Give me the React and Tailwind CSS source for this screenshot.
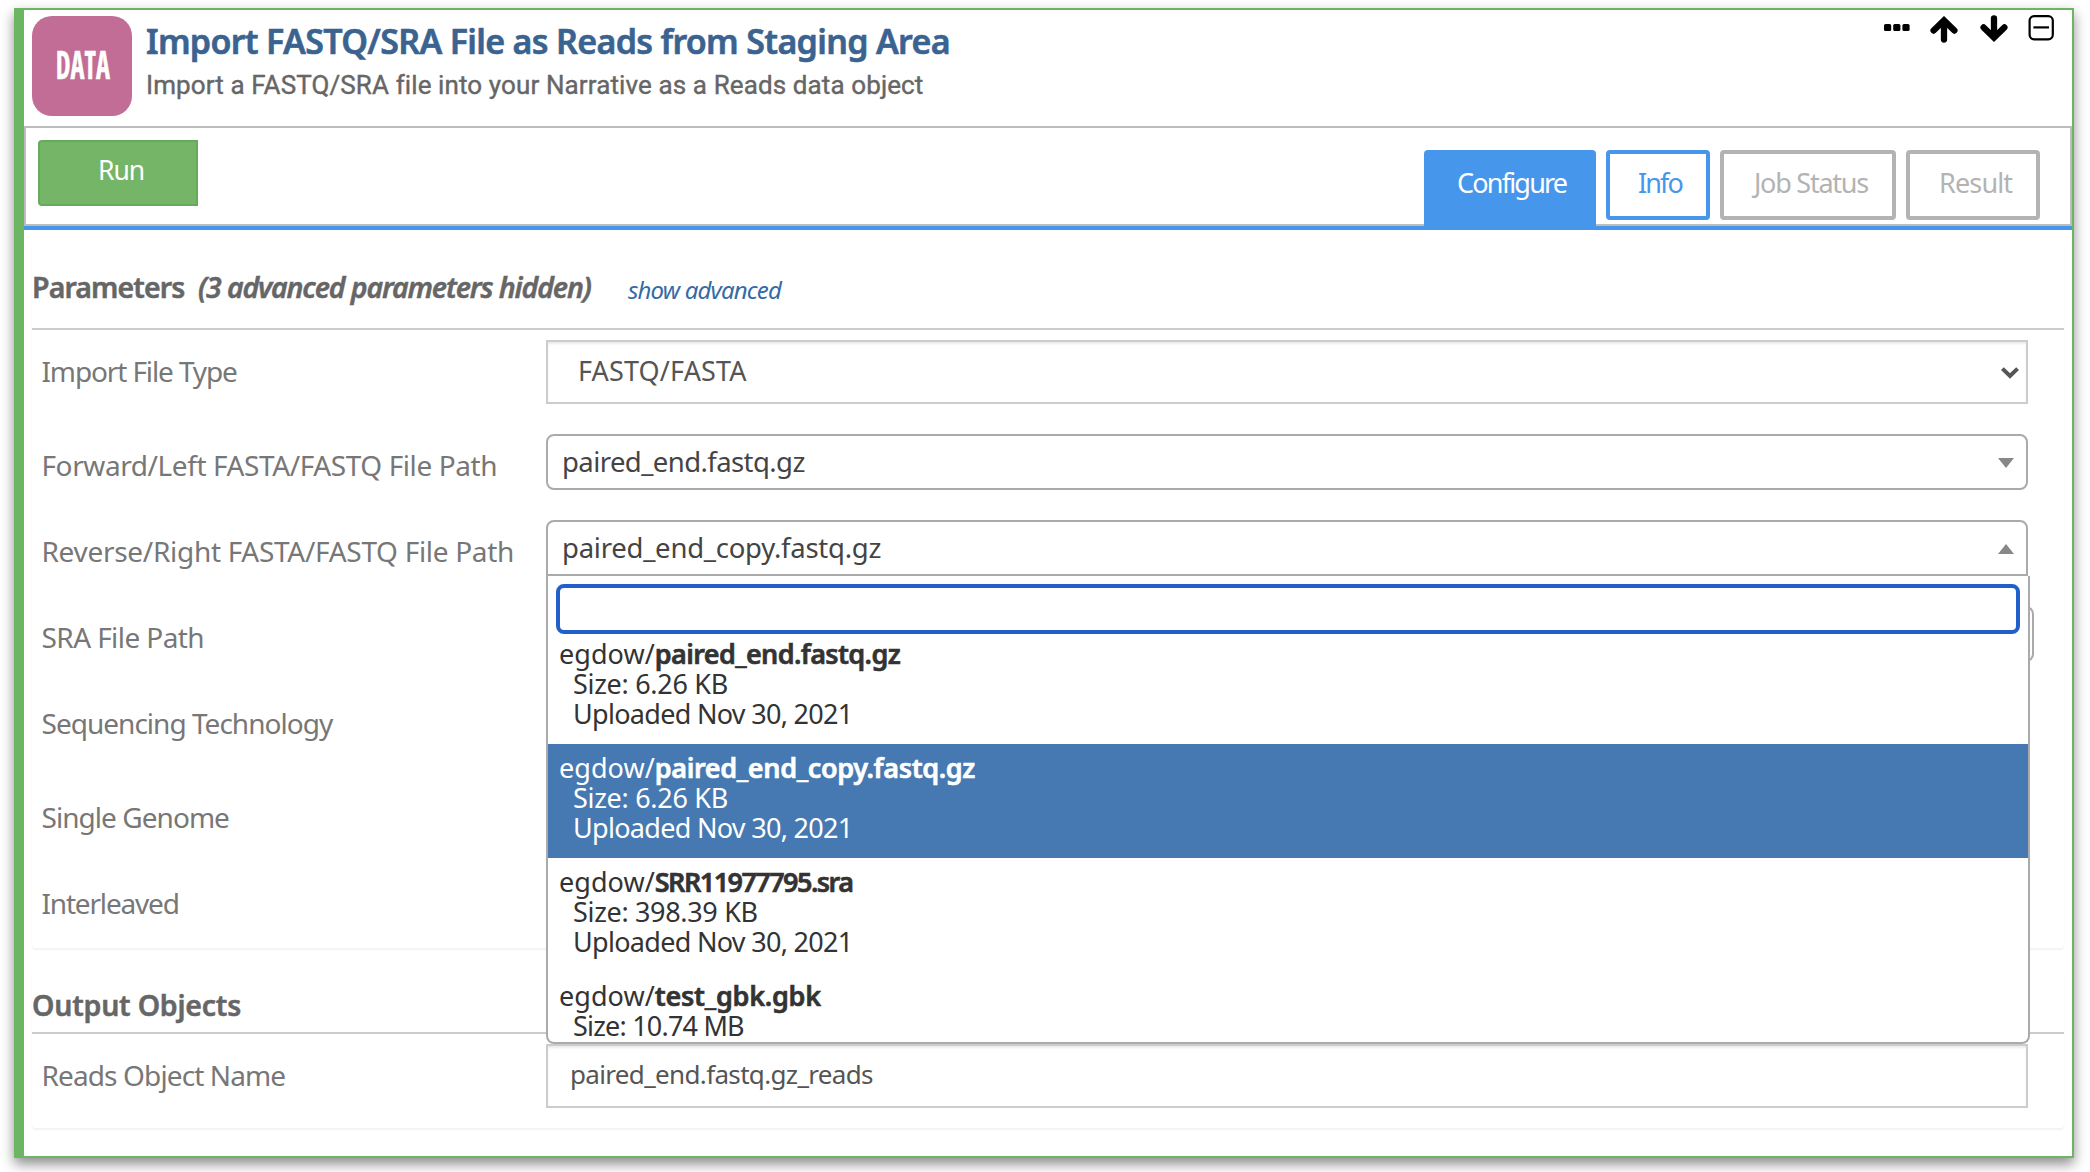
import React from "react";

const OPTIONS = [
  { name: "paired_end.fastq.gz", nameTracking: "tracking-[-0.64px]", size: "Size: 6.26 KB", sizeTracking: "tracking-[-0.3px]", date: "Uploaded Nov 30, 2021" },
  { name: "paired_end_copy.fastq.gz", nameTracking: "tracking-[-0.37px]", size: "Size: 6.26 KB", sizeTracking: "tracking-[-0.3px]", date: "Uploaded Nov 30, 2021", active: true },
  { name: "SRR11977795.sra", nameTracking: "tracking-[-1.55px]", size: "Size: 398.39 KB", sizeTracking: "tracking-[-0.33px]", date: "Uploaded Nov 30, 2021" },
  { name: "test_gbk.gbk", nameTracking: "tracking-[-0.27px]", size: "Size: 10.74 MB", sizeTracking: "tracking-[-0.8px]" },
];

function Row({ label, tracking, height, children }) {
  return (
    <div className={`flex items-start pl-2 ${height}`}>
      <div className={`w-[506px] shrink-0 whitespace-nowrap pl-[1.5px] text-[28px] leading-[62px] text-[#777] ${tracking}`}>
        {label}
      </div>
      {children}
    </div>
  );
}

function Arrow({ down }) {
  return (
    <svg
      viewBox="0 0 28 27"
      className={down ? "h-[27px] w-7 rotate-180" : "mt-px h-[27px] w-7"}
      fill="none"
      stroke="black"
      strokeWidth="6.3"
      strokeLinecap="round"
    >
      <path d="M3.6 14.6 14 4.4 24.4 14.6M14 6V23.6" />
    </svg>
  );
}

function CellActions() {
  return (
    <div className="-mt-px ml-auto flex items-start">
      <svg viewBox="0 0 26 8" className="mr-5 mt-[9px] h-2 w-[26px]">
        <rect x="0" y="0" width="7.2" height="7" rx="1.6" />
        <rect x="9.2" y="0" width="7.2" height="7" rx="1.6" />
        <rect x="18.4" y="0" width="7.2" height="7" rx="1.6" />
      </svg>
      <Arrow />
      <span className="w-[22px]" />
      <Arrow down />
      <svg viewBox="0 0 26 26" className="ml-5 size-[26px]" fill="none" stroke="black" strokeWidth="2.2">
        <rect x="1.6" y="1.1" width="23.2" height="23.2" rx="4.5" />
        <path d="M5.4 12.4H21" />
      </svg>
    </div>
  );
}

function Dropdown() {
  return (
    <div className="absolute -left-0.5 top-[54px] z-10 flex h-[468px] w-[1484px] flex-col overflow-hidden rounded-b-lg border-2 border-t-0 border-[#aaa] bg-white text-[27px] leading-[30px] text-[#333]">
      <div className="mx-2 mt-2 h-[50px] shrink-0 rounded-lg border-4 border-[#2160c8]" />
      <div className="-mt-1 overflow-hidden">
        {OPTIONS.map((o) => (
          <div
            key={o.name}
            className={`h-[114px] whitespace-nowrap pl-[11px] pt-[9px] ${o.active ? "bg-[#4679b2] text-white" : ""}`}
          >
            <div>
              <span className="tracking-[0.05px]">egdow/</span>
              <span className={`font-semibold [-webkit-text-stroke:0.6px_currentColor] ${o.nameTracking}`}>{o.name}</span>
            </div>
            <div className={`pl-3.5 ${o.sizeTracking}`}>{o.size}</div>
            {o.date && <div className="pl-3.5 tracking-[-0.7px]">{o.date}</div>}
          </div>
        ))}
      </div>
    </div>
  );
}

export default function App() {
  return (
    <div className="h-[1172px] overflow-hidden bg-white font-['Noto_Sans',sans-serif]">
      <div className="ml-3.5 mt-2 flex h-[1150px] w-[2060px] flex-col border-2 border-l-[10px] border-[#6bb563] bg-white shadow-[0_6px_12px_rgba(0,0,0,0.45)]">
        <header className="flex h-[116px] shrink-0 whitespace-nowrap pl-2 pr-[18px] pt-1.5">
          <div className="flex size-[100px] items-center justify-center rounded-[20px] bg-[#c16d96] pb-1.5 pl-px">
            <span className="scale-x-[0.68] font-['Open_Sans',sans-serif] text-[39px] font-bold leading-none text-white [-webkit-text-stroke:0.5px_white] [font-stretch:75%]">
              DATA
            </span>
          </div>
          <div className="ml-[13px]">
            <h1 className="pl-px text-[34px] font-semibold leading-[50px] tracking-[-0.68px] text-[#3a6390] [-webkit-text-stroke:0.6px_currentColor]">
              Import FASTQ/SRA File as Reads from Staging Area
            </h1>
            <p className="pl-px pt-px font-[Roboto,sans-serif] text-[26px] leading-9 tracking-[0.11px] text-[#666] [-webkit-text-stroke:0.4px_currentColor]">
              Import a FASTQ/SRA file into your Narrative as a Reads data object
            </p>
          </div>
          <CellActions />
        </header>

        <div className="flex h-[100px] shrink-0 justify-between whitespace-nowrap border-2 border-[#bdbdbd] pl-3 pr-[30px]">
          <button className="mt-3 h-[66px] w-40 rounded-l-[4px] border-2 border-[#66ab5a] bg-[#75b567] pl-[58px] text-left text-[26.5px] leading-[57px] tracking-[-1.08px] text-white">
            <span className="block h-full">Run</span>
          </button>
          <div className="mt-[22px] flex gap-2.5 text-[27px]">
            <div className="-mb-0.5 h-[76px] w-[172px] rounded-t-[4px] bg-[#4696ec] pl-[33px] leading-[65px] tracking-[-1.8px] text-white">Configure</div>
            <div className="h-[70px] w-[104px] rounded-[4px] border-4 border-[#4696ec] pl-7 leading-[57px] tracking-[-1.9px] text-[#4696ec]">Info</div>
            <div className="h-[70px] w-[176px] rounded-[4px] border-4 border-[#b3b3b3] pl-[30px] leading-[57px] tracking-[-1.25px] text-[#b3b3b3]">Job Status</div>
            <div className="h-[70px] w-[134px] rounded-[4px] border-4 border-[#b3b3b3] pl-[29px] leading-[57px] tracking-[-0.85px] text-[#b3b3b3]">Result</div>
          </div>
        </div>
        <div className="h-1 shrink-0 bg-[#4696ec]" />

        <section className="mx-2 mt-2.5 h-[708px] shrink-0 rounded-[4px] shadow-[0_2px_2px_rgba(0,0,0,0.05)]">
          <div className="flex h-[90px] whitespace-nowrap border-b-2 border-[#ccc] text-[28.5px] font-semibold leading-[94px] text-[#666]">
            <h2 className="w-[166px] tracking-[-0.9px] [-webkit-text-stroke:0.5px_currentColor]">Parameters</h2>
            <em className="w-[430px] tracking-[-1.12px] [-webkit-text-stroke:0.5px_currentColor]">(3 advanced parameters hidden)</em>
            <a className="text-[24px] font-normal italic leading-[99px] tracking-[-0.84px] text-[#356ba5]">show advanced</a>
          </div>
          <div className="pt-2.5">
            <Row label="Import File Type" tracking="tracking-[-1.12px]" height="h-[94px]">
              <div className="flex h-16 w-[1482px] items-start justify-between border-2 border-[#ccc] pl-[30px] pr-[7px] text-[27px] leading-[57px] tracking-[0.15px] text-[#555] shadow-[inset_0_2px_2px_rgba(0,0,0,0.08)]">
                FASTQ/FASTA
                <svg viewBox="0 0 18 12" className="mt-[25px] h-3 w-[18px]" fill="none" stroke="#555" strokeWidth="4">
                  <path d="M1.4 1.6 9 9 16.6 1.6" />
                </svg>
              </div>
            </Row>
            <Row label="Forward/Left FASTA/FASTQ File Path" tracking="tracking-[-0.41px]" height="h-[86px]">
              <div className="flex h-14 w-[1482px] items-start justify-between rounded-lg border-2 border-[#aaa] pl-[14px] pr-3 text-[27.5px] leading-[52px] tracking-[-0.58px] text-[#444]">
                paired_end.fastq.gz
                <svg viewBox="0 0 16 10" className="mt-[22px] h-2.5 w-4" fill="#888"><path d="M0 0H16L8 10z" /></svg>
              </div>
            </Row>
            <Row label="Reverse/Right FASTA/FASTQ File Path" tracking="tracking-[-0.3px]" height="h-[86px]">
              <div className="relative flex h-14 w-[1482px] items-start justify-between rounded-t-lg border-2 border-[#aaa] pl-[14px] pr-3 text-[27.5px] leading-[52px] tracking-[-0.25px] text-[#444]">
                paired_end_copy.fastq.gz
                <svg viewBox="0 0 16 10" className="mt-[22px] h-2.5 w-4" fill="#888"><path d="M0 10H16L8 0z" /></svg>
                <Dropdown />
              </div>
            </Row>
            <Row label="SRA File Path" tracking="tracking-[-0.58px]" height="h-[86px]">
              <div className="h-14 w-[1488px] shrink-0 rounded-lg border-2 border-[#aaa]" />
            </Row>
            <Row label="Sequencing Technology" tracking="tracking-[-0.98px]" height="h-[94px]" />
            <Row label="Single Genome" tracking="tracking-[-0.95px]" height="h-[86px]" />
            <Row label="Interleaved" tracking="tracking-[-1.18px]" height="h-[76px]" />
          </div>
        </section>

        <section className="mx-2 mt-5 h-[160px] shrink-0 rounded-[4px] shadow-[0_2px_2px_rgba(0,0,0,0.05)]">
          <h2 className="h-[66px] border-b-2 border-[#ccc] text-[28.5px] font-semibold leading-[74px] tracking-[-0.22px] text-[#666] [-webkit-text-stroke:0.5px_currentColor]">
            Output Objects
          </h2>
          <div className="pt-2.5">
            <Row label="Reads Object Name" tracking="tracking-[-0.88px]" height="h-16">
              <div className="h-16 w-[1482px] border-2 border-[#ccc] pl-[22px] text-[26px] leading-[57px] tracking-[-0.66px] text-[#555] shadow-[inset_0_2px_2px_rgba(0,0,0,0.08)]">
                paired_end.fastq.gz_reads
              </div>
            </Row>
          </div>
        </section>
      </div>
    </div>
  );
}
